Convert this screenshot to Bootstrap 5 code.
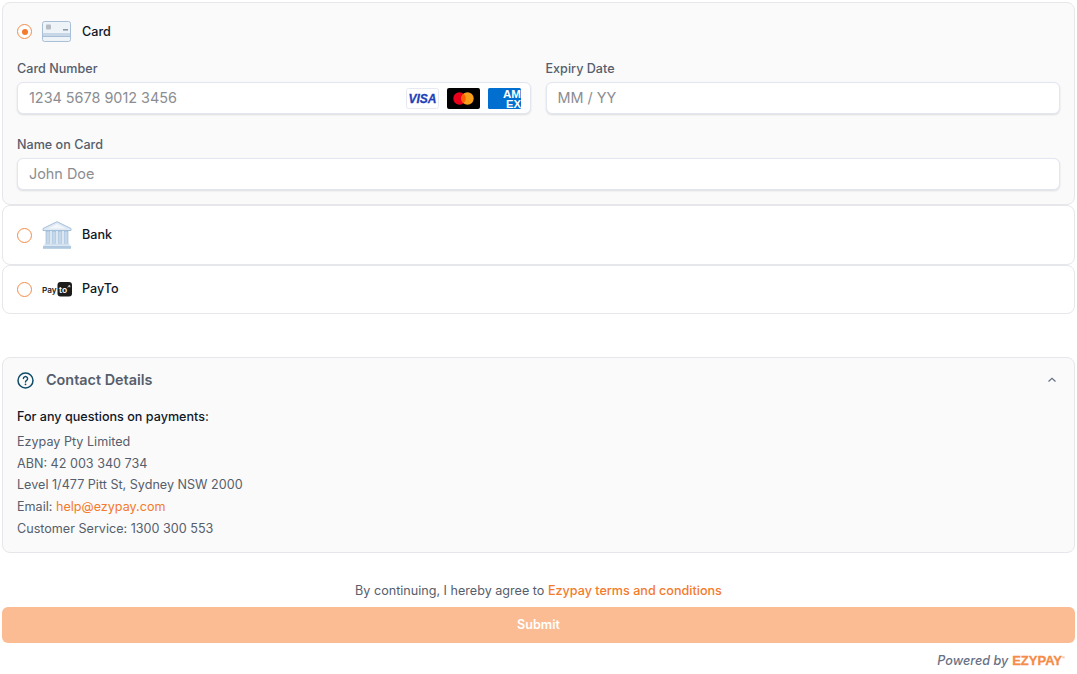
<!DOCTYPE html>
<html lang="en"><head><meta charset="utf-8">
<title>Payment</title>
<link href="https://cdn.jsdelivr.net/npm/bootstrap@5.3.0/dist/css/bootstrap.min.css" rel="stylesheet">
<style>
body{font-family:Inter,"Liberation Sans",sans-serif;font-size:12.6px;color:#565e6c;background:#fff;padding:2px;width:1077px;height:674px;overflow:hidden}
.pay-wrap{width:1073px}
.opt-box{border:1px solid #e6e7ea;border-radius:8px;background:#fff}
.opt-box.is-on{background:#fafafa}
.opt-head{padding-left:14px;gap:10px;color:#101828;font-size:12.6px;font-weight:500}
.h-card{height:56px;padding-top:1px}.h-card>span:last-child{padding-top:1px}.h-bank{height:58px}.h-payto{height:47px;padding-bottom:1px}
.radio-o{width:15px;height:15px;border:1.4px solid #f58b47;border-radius:50%;flex:none;display:flex;align-items:center;justify-content:center;background:#fff}
.radio-o i{width:6px;height:6px;background:#f47a2c;border-radius:50%;display:block}
.opt-ico{width:30px;flex:none;display:block}
.card-form{padding:0 14px 14px;row-gap:21px}
.fld-label{font-size:12.6px;font-weight:500;color:#565e6c;line-height:18px;margin-bottom:4px;padding-top:1px}
.fld-input{height:32px;border:1px solid #e1e6f0;border-radius:6px;background:#fff;box-shadow:0 1px 2px rgba(16,24,40,.13);padding:0 11px;font-size:14.4px;color:#8b8d92}
.fld-input.has-brands{padding:0 9px 0 11px}
.left-col{padding-right:8px}
.right-col{padding-left:7px}
.brand-ico{width:33px;height:21px;display:block}
.contact-box{border:1px solid #e6e7ea;border-radius:8px;background:#fafafa;margin-top:43px;height:196px}
.contact-head{height:44px;padding:0 14px;color:#565e6c;font-size:14.4px;font-weight:600}
.chev-ico{margin-right:2px}
.contact-body{padding:0 14px;font-size:12.6px;line-height:21.8px}
.contact-lead{color:#101828;font-weight:500;margin-bottom:3px;margin-top:4px}
.orange-txt{color:#f47a2c;text-decoration:none}
.terms{font-size:12.6px;margin-top:29px;line-height:18px}
.terms a{font-weight:500}
.submit-btn{width:100%;height:36px;background:#fbbc94;border:0;border-radius:6px;color:#fff;font-weight:600;font-size:12.6px;margin-top:7px;padding:0}
.powered{margin-top:10px;padding-right:10px;font-style:italic;font-size:12.6px;font-weight:500;color:#667085;line-height:16px;gap:4px}
.logo-txt{font-style:normal;font-weight:700;color:#f58b47;font-family:"Liberation Sans",sans-serif;font-size:13px;-webkit-text-stroke:.3px #f58b47}
.logo-txt sup{font-size:4px;top:-6px;-webkit-text-stroke:0}
</style></head>
<body>
<div class="pay-wrap">
  <div class="opt-box is-on">
    <div class="opt-head h-card d-flex align-items-center">
      <span class="radio-o"><i></i></span>
      <svg class="opt-ico" viewBox="0 0 30 21" height="21"><rect x=".5" y=".5" width="28" height="20" rx="2" fill="#eef3f8" stroke="#a9bfd8"/><rect x="1" y="12" width="27" height="3" fill="#c7d7e8"/><line x1="1" y1="15.500" x2="28" y2="15.500" stroke="#a9bfd8"/><rect x="4" y="3.500" width="5" height="5" rx="1" fill="#b5bcc4"/><rect x="21" y="8" width="5" height="1.600" fill="#8c9bab"/></svg>
      <span>Card</span>
    </div>
    <div class="row g-0 card-form">
      <div class="col-6 left-col">
        <div class="fld-label">Card Number</div>
        <div class="fld-input has-brands d-flex align-items-center justify-content-between">
          <span>1234 5678 9012 3456</span>
          <span class="d-flex gap-2">
            <svg class="brand-ico" viewBox="0 0 33 21"><rect x=".5" y=".5" width="32" height="20" rx="2" fill="#fff" stroke="#e6e9f0"/><text x="16.500" y="15" text-anchor="middle" font-family="Liberation Sans" font-size="12" font-weight="700" font-style="italic" fill="#1f3fb8" stroke="#1f3fb8" stroke-width=".3">VISA</text></svg>
            <svg class="brand-ico" viewBox="0 0 33 21"><rect width="33" height="21" rx="2" fill="#000"/><circle cx="12.500" cy="10.500" r="6.200" fill="#eb001b"/><circle cx="20.500" cy="10.500" r="6.200" fill="#f79e1b"/><path d="M16.500 5.700a6.200 6.200 0 0 1 0 9.600a6.200 6.200 0 0 1 0-9.600z" fill="#ff5f00"/></svg>
            <svg class="brand-ico" viewBox="0 0 33 21"><rect width="33" height="21" rx="1.500" fill="#016fd0"/><text x="15" y="10" textLength="18" lengthAdjust="spacingAndGlyphs" font-family="Liberation Sans" font-size="10" font-weight="700" fill="#fff">AM</text><text x="18" y="20" textLength="15" lengthAdjust="spacingAndGlyphs" font-family="Liberation Sans" font-size="10" font-weight="700" fill="#fff">EX</text></svg>
          </span>
        </div>
      </div>
      <div class="col-6 right-col">
        <div class="fld-label">Expiry Date</div>
        <div class="fld-input d-flex align-items-center">MM / YY</div>
      </div>
      <div class="col-12">
        <div class="fld-label">Name on Card</div>
        <div class="fld-input d-flex align-items-center">John Doe</div>
      </div>
    </div>
  </div>
  <div class="opt-box">
    <div class="opt-head h-bank d-flex align-items-center">
      <span class="radio-o"></span>
      <svg class="opt-ico" viewBox="0 0 30 28" height="28"><path d="M15 .700 29 7.500V9.500H1V7.500Z" fill="#dfe9f3" stroke="#a4c0da"/><path d="M15 3 24 7.500H6Z" fill="#f3f7fb"/><g fill="#c4d8ea" stroke="#9dbad6" stroke-width=".7"><rect x="4" y="10.500" width="4" height="12"/><rect x="10" y="10.500" width="4" height="12"/><rect x="16" y="10.500" width="4" height="12"/><rect x="22" y="10.500" width="4" height="12"/></g><rect x="2.500" y="22.500" width="25" height="2" fill="#cfdfee"/><rect x="1" y="24.800" width="28" height="3" fill="#afc8e0"/></svg>
      <span>Bank</span>
    </div>
  </div>
  <div class="opt-box">
    <div class="opt-head h-payto d-flex align-items-center">
      <span class="radio-o"></span>
      <svg class="opt-ico" viewBox="0 0 30 15" height="15"><text x="0" y="11" font-family="Inter" font-size="8.200" font-weight="600" fill="#222">Pay</text><rect x="15.500" y="0" width="14.500" height="14.500" rx="3" fill="#1c1c1c"/><text x="17" y="10.500" font-family="Inter" font-size="8.500" font-weight="600" fill="#fff">to</text><path d="M25.500 5.200 28 3.800M26.500 3.700l1.500.1-.2 1.500" fill="none" stroke="#fff" stroke-width=".7"/></svg>
      <span>PayTo</span>
    </div>
  </div>
  <div class="contact-box">
    <div class="contact-head d-flex align-items-center">
      <svg width="17" height="17" viewBox="0 0 17 17" class="me-2 flex-none"><circle cx="8.500" cy="8.500" r="7.500" fill="none" stroke="#0f4c68" stroke-width="1.500"/><path d="M6.400 6.600a2.100 2.100 0 1 1 3.200 1.800c-.7.400-1.100.8-1.100 1.600" fill="none" stroke="#0f4c68" stroke-width="1.400" stroke-linecap="round"/><circle cx="8.500" cy="12.300" r=".9" fill="#0f4c68"/></svg>
      <span class="ms-1 flex-grow-1">Contact Details</span>
      <svg width="12" height="12" viewBox="0 0 12 12" class="chev-ico"><path d="M2.500 7.500 6 4.200l3.500 3.300" fill="none" stroke="#667085" stroke-width="1.200"/></svg>
    </div>
    <div class="contact-body">
      <div class="contact-lead">For any questions on payments:</div>
      <div>Ezypay Pty Limited</div>
      <div>ABN: 42 003 340 734</div>
      <div>Level 1/477 Pitt St, Sydney NSW 2000</div>
      <div>Email: <a class="orange-txt" href="#">help@ezypay.com</a></div>
      <div>Customer Service: 1300 300 553</div>
    </div>
  </div>
  <div class="terms text-center">By continuing, I hereby agree to <a class="orange-txt" href="#">Ezypay terms and conditions</a></div>
  <button class="submit-btn btn d-block" type="button">Submit</button>
  <div class="powered d-flex justify-content-end align-items-center">Powered by <span class="logo-txt">EZYPAY<sup>®</sup></span></div>
</div>
</body></html>
